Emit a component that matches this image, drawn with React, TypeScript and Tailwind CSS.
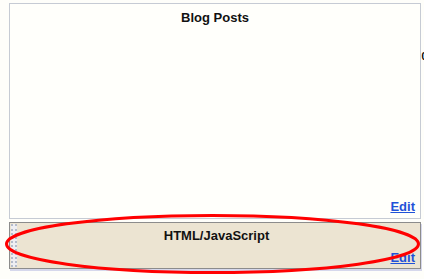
export default function App() {
  return (
    <div className="relative w-[424px] h-[279px] overflow-hidden bg-[#fefefa] font-['Liberation_Sans',Arial,sans-serif]">
      <div className="flex flex-col pl-[9px] pr-[3px] pt-[3px]">
        {/* Blog Posts widget */}
        <div className="relative h-[216px] border border-[#c6cbd4] bg-[#fffffb] flex flex-col">
          <h3 className="text-center text-[13px] font-bold text-[#111] leading-[15px] pt-[6px]">Blog Posts</h3>
          <div className="flex-1" />
          <div className="flex justify-end pr-[5px] pb-[4px]">
            <a className="text-[13px] font-bold leading-[15px] text-[#1f52d8] underline">Edit</a>
          </div>
          <span className="absolute right-[-7px] top-[48px] text-[10px] font-bold leading-none text-black">0</span>
        </div>

        {/* HTML/JavaScript widget */}
        <div className="mt-[3px] h-[47px] border border-[#8c8c8c] bg-[#ece4d2] flex shadow-[1px_2px_0_#d6d8ec]">
          <div className="w-[6px] ml-[1px] my-[1px] border-x-2 border-dotted border-[#b4bccb] bg-[#eeeef2]" />
          <div className="flex-1 flex flex-col">
            <h3 className="text-center text-[13px] font-bold text-[#111] leading-[15px] pt-[5px] pr-[4px]">HTML/JavaScript</h3>
            <div className="flex-1" />
            <div className="flex justify-end pr-[5px] pb-[3px]">
              <a className="text-[13px] font-bold leading-[15px] text-[#1f52d8] underline">Edit</a>
            </div>
          </div>
        </div>
      </div>

      {/* red highlight ellipse */}
      <svg className="absolute left-0 top-0 pointer-events-none" width="424" height="279">
        <ellipse cx="212.5" cy="244" rx="206" ry="28.5" fill="none" stroke="#ff0000" strokeWidth="3" />
      </svg>
    </div>
  );
}
